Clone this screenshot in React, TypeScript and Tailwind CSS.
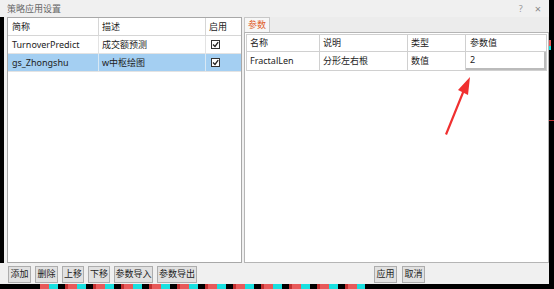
import React from "react";

const font = { fontFamily: '"Noto Sans", "Noto Sans CJK SC", sans-serif' };

function Check() {
  return (
    <div className="w-[9px] h-[9px] border border-[#333] bg-white flex items-center justify-center">
      <svg width="7" height="7" viewBox="0 0 7 7">
        <path d="M1 3.5 L3 5.5 L6.2 1.2" stroke="#222" strokeWidth="1.3" fill="none" />
      </svg>
    </div>
  );
}

function Btn({ label, w }: { label: string; w: string }) {
  return (
    <div className={`h-[17px] ${w} border border-[#adadad] bg-[#e1e1e1] flex items-center justify-center text-[9px] text-[#222]`}>
      {label}
    </div>
  );
}

const bars = Array.from({ length: 220 }, (_, i) => {
  const r = (i * 37 + 11) % 19;
  const color = r < 6 ? "#19e0e0" : r < 12 ? "#e85a5a" : r < 14 ? "#c03030" : "#000";
  return { color, w: 1 + (r % 2) };
});

export default function App() {
  return (
    <div className="w-[554px] h-[289px] bg-black relative overflow-hidden" style={font}>
      <div className="flex h-[284px]">
        <div className="w-[549px] bg-[#f0f0f0] flex flex-col">
          <div className="h-[17px] flex items-center pl-[7px] pr-[8px] text-[9px] text-[#666]">
            <span className="flex-1">策略应用设置</span>
            <span className="text-[#999] text-[9px] mr-[12px]">?</span>
            <span className="text-[#888] text-[11px] leading-none">×</span>
          </div>

          <div className="flex h-[246px]">
            <div className="w-[4px] bg-black h-full" />
            <div className="w-[3px]" />
            <div className="w-[235px] border border-[#a8a8a8] bg-white text-[9px] text-[#222] flex flex-col">
              <div className="flex h-[18px] border-b border-[#d6d6d6]">
                <div className="w-[91px] pl-[4px] flex items-center border-r border-[#d6d6d6]">简称</div>
                <div className="w-[107px] pl-[3px] flex items-center border-r border-[#d6d6d6]">描述</div>
                <div className="flex-1 pl-[3px] flex items-center">启用</div>
              </div>
              <div className="flex h-[18px] border-b border-[#e3e3e3]">
                <div className="w-[91px] pl-[4px] flex items-center border-r border-[#e3e3e3]">TurnoverPredict</div>
                <div className="w-[107px] pl-[3px] flex items-center border-r border-[#e3e3e3]">成交额预测</div>
                <div className="flex-1 pl-[5px] flex items-center"><Check /></div>
              </div>
              <div className="flex h-[18px] bg-[#a4cff2] border-b border-[#e3e3e3]">
                <div className="w-[91px] pl-[4px] flex items-center border-r border-[#d8e8f4]">gs_Zhongshu</div>
                <div className="w-[107px] pl-[3px] flex items-center border-r border-[#d8e8f4]">w中枢绘图</div>
                <div className="flex-1 pl-[5px] flex items-center"><Check /></div>
              </div>
            </div>
            <div className="w-[2px]" />
            <div className="w-[305px] flex flex-col">
              <div className="h-[15px] flex bg-[#ececec]">
                <div className="w-[26px] border border-b-0 border-[#c8c8c8] bg-[#f7f7f7] flex items-center justify-center text-[9px] text-[#e0602c]">
                  参数
                </div>
              </div>
              <div className="flex-1 border border-[#b5b5b5] bg-white p-[1px] text-[9px] text-[#222]">
                <div className="flex h-[18px] border border-[#d0d0d0]">
                  <div className="w-[73px] pl-[3px] flex items-center border-r border-[#d0d0d0]">名称</div>
                  <div className="w-[88px] pl-[3px] flex items-center border-r border-[#d0d0d0]">说明</div>
                  <div className="w-[58px] pl-[3px] flex items-center border-r border-[#d0d0d0]">类型</div>
                  <div className="flex-1 pl-[4px] flex items-center">参数值</div>
                </div>
                <div className="flex h-[19px] border border-t-0 border-[#d0d0d0]">
                  <div className="w-[73px] pl-[3px] flex items-center border-r border-[#d0d0d0]">FractalLen</div>
                  <div className="w-[88px] pl-[3px] flex items-center border-r border-[#d0d0d0]">分形左右根</div>
                  <div className="w-[58px] pl-[3px] flex items-center border-r border-[#d0d0d0]">数值</div>
                  <div className="flex-1 pl-[4px] flex items-center border-2 border-t-0 border-l-0 border-[#bbb] border-l-[#999]">2</div>
                </div>
              </div>
            </div>
          </div>

          <div className="flex items-center h-[21px] pt-[1px]">
            <div className="w-[8px]" />
            <div className="flex gap-[4px]">
              <Btn label="添加" w="w-[23px]" />
              <Btn label="删除" w="w-[23px]" />
              <Btn label="上移" w="w-[22px]" />
              <Btn label="下移" w="w-[22px]" />
              <Btn label="参数导入" w="w-[39px]" />
              <Btn label="参数导出" w="w-[40px]" />
            </div>
            <div className="w-[177px]" />
            <div className="flex gap-[5px]">
              <Btn label="应用" w="w-[23px]" />
              <Btn label="取消" w="w-[23px]" />
            </div>
          </div>
        </div>
        <div className="flex-1 bg-black flex flex-col">
          <div className="h-[40px]" />
          <div className="h-[6px] w-[2px] bg-[#e85a5a]" />
          <div className="h-[4px] w-[2px] bg-[#19e0e0]" />
          <div className="h-[70px]" />
          <div className="h-[1px] w-[5px] bg-[#c03030]" />
        </div>
      </div>
      <div className="h-[5px] flex items-stretch pl-[40px]">
        {bars.map((b, i) => (
          <div key={i} style={{ width: b.w, background: b.color }} />
        ))}
      </div>
      <svg className="absolute left-0 top-0" width="554" height="289" viewBox="0 0 554 289">
        <path d="M445 134 L462 92 L458 90 L470 77 L468 95 L464 93 L447 135 Z" fill="#f03030" />
      </svg>
    </div>
  );
}
